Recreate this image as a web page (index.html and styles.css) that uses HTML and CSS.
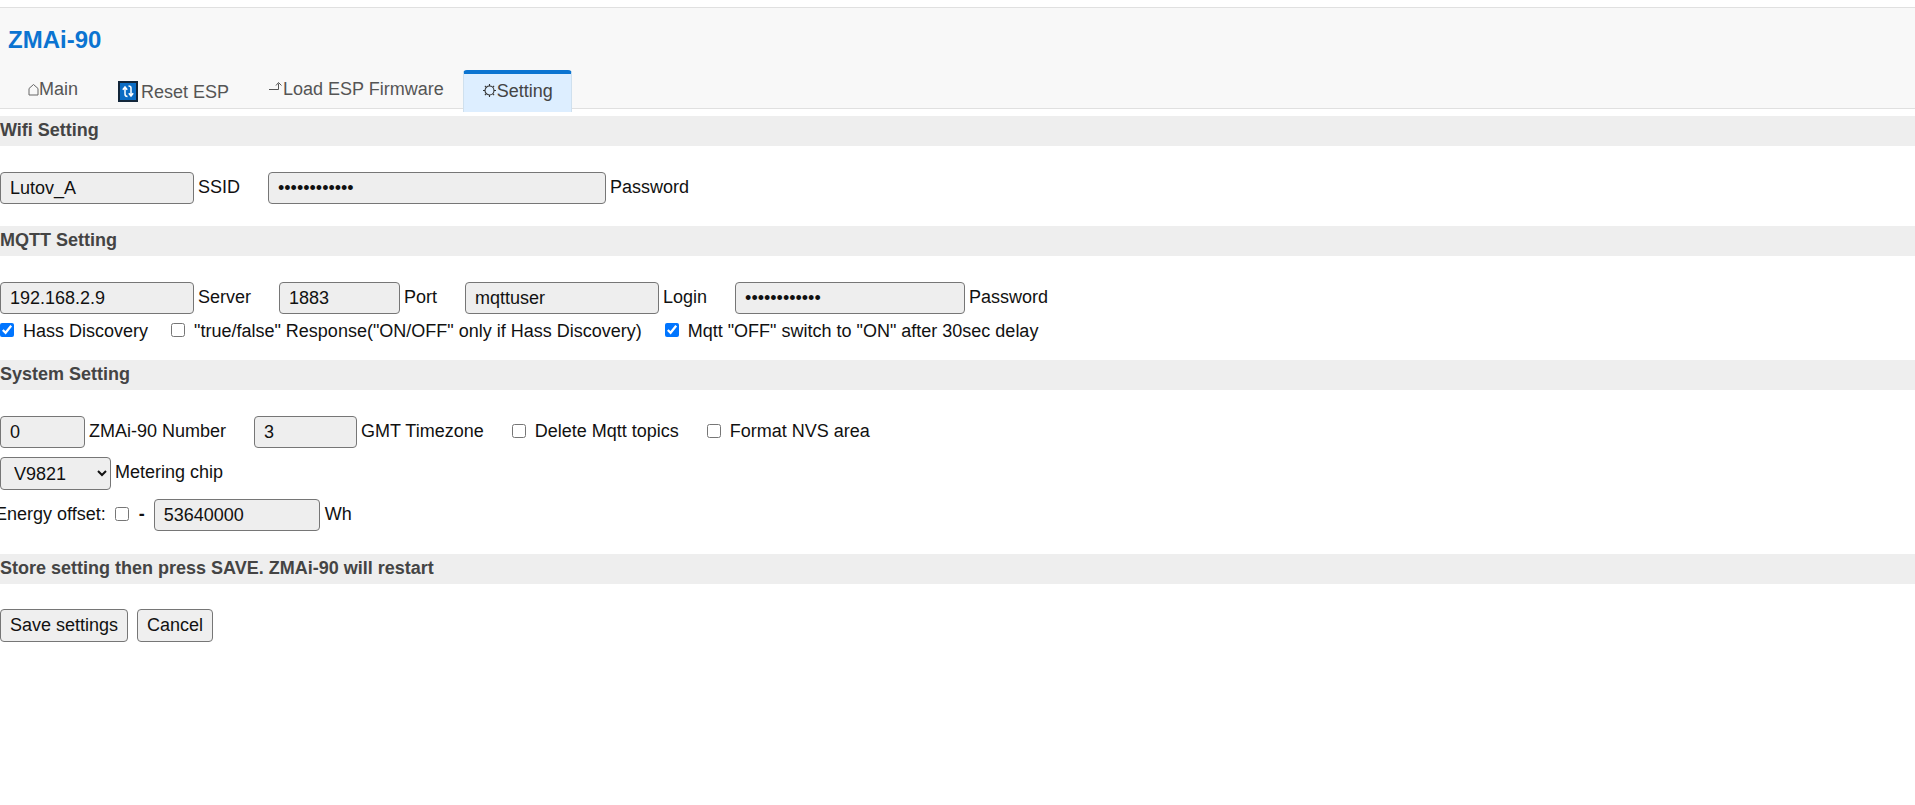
FILE: index.html
```html
<!DOCTYPE html>
<html>
<head>
    <title>ZMAi-90</title>
    <link rel="stylesheet" href="styles.css">
</head>
<body>
    <div class="header">
        <h1 class="title">ZMAi-90</h1>
        <div class="tabs">
            <a class="tab"><svg class="ico-home" viewBox="0 0 11 13"><path d="M1 12V5.500L5.500 1.500 10 5.500V12Z" fill="none" stroke="#666" stroke-width="1"/></svg>Main</a>
            <a class="tab tab-low"><svg class="ico-reset" viewBox="0 0 20 21"><rect x="1" y="1" width="18" height="19" fill="#0a6cc4" stroke="#12263a" stroke-width="2"/><path d="M7 6.500V13q0 2.500 2.500 2.500M4.800 8.700 7 6l2.200 2.700M13 15v-8q0-2-2.500-2M10.800 12.300 13 15l2.200-2.700" fill="none" stroke="#fff" stroke-width="1.500"/></svg>Reset ESP</a>
            <a class="tab"><svg class="ico-load" viewBox="0 0 14 12"><path d="M0 8.500H9.500V2.500M7 4.500 9.500 1.500 12.500 4.500" fill="none" stroke="#555" stroke-width="1"/></svg>Load ESP Firmware</a>
            <a class="tab tab-active"><svg class="ico-gear" viewBox="0 0 15 15"><circle cx="7.500" cy="7.500" r="4.500" fill="none" stroke="#333" stroke-width="1.100"/><path d="M7.500 1v2M7.500 12v2M1 7.500h2M12 7.500h2M2.900 2.900l1.400 1.400M10.700 10.700l1.400 1.400M2.900 12.100l1.400-1.400M10.700 4.300l1.400-1.400" stroke="#333" stroke-width="1.100"/></svg>Setting</a>
        </div>
    </div>

    <div class="bar">Wifi Setting</div>
    <div class="row">
        <input class="w194" type="text" value="Lutov_A">
        <label>SSID</label>
        <input class="w338" type="password" value="............">
        <label>Password</label>
    </div>

    <div class="bar">MQTT Setting</div>
    <div class="row">
        <input class="w194" type="text" value="192.168.2.9">
        <label>Server</label>
        <input class="w121" type="text" value="1883">
        <label>Port</label>
        <input class="w194" type="text" value="mqttuser">
        <label>Login</label>
        <input class="w230" type="password" value="............">
        <label>Password</label>
    </div>
    <div class="row check-row">
        <input type="checkbox" checked><label>Hass Discovery</label>
        <input type="checkbox"><label>"true/false" Response("ON/OFF" only if Hass Discovery)</label>
        <input type="checkbox" checked><label>Mqtt "OFF" switch to "ON" after 30sec delay</label>
    </div>

    <div class="bar">System Setting</div>
    <div class="row">
        <input class="w85" type="text" value="0">
        <label>ZMAi-90 Number</label>
        <input class="w103" type="text" value="3">
        <label>GMT Timezone</label>
        <input type="checkbox"><label>Delete Mqtt topics</label>
        <input type="checkbox"><label>Format NVS area</label>
    </div>
    <div class="row sub-row">
        <select><option>V9821</option></select>
        <label>Metering chip</label>
    </div>
    <div class="row sub-row energy-row">
        <span>Energy offset:</span>
        <input type="checkbox">
        <b class="minus">-</b>
        <input class="w166" type="text" value="53640000">
        <label>Wh</label>
    </div>

    <div class="bar bar-store">Store setting then press SAVE. ZMAi-90 will restart</div>
    <div class="row buttons">
        <button>Save settings</button>
        <button>Cancel</button>
    </div>
</body>
</html>
```

FILE: styles.css
```css
body {
    margin: 0;
    padding-top: 7px;
    font-family: "Liberation Sans", Arial, sans-serif;
    font-size: 18px;
    color: #111;
    background: #fff;
}
.header {
    height: 100px;
    background: #f8f8f8;
    border-top: 1px solid #e0e0e0;
    border-bottom: 1px solid #e0e0e0;
}
.title {
    margin: 0;
    padding: 18px 0 0 8px;
    height: 44px;
    font-size: 24px;
    line-height: 28px;
    font-weight: bold;
    color: #0b74d1;
}
.tabs {
    display: flex;
    padding-left: 8px;
}
.tab {
    display: block;
    height: 38px;
    box-sizing: border-box;
    padding: 9px 20px 0;
    line-height: 20px;
    color: #555;
    white-space: nowrap;
}
.tab-low {
    padding-top: 11px;
}
.tab-active {
    height: 42px;
    padding: 7px 18px 0;
    margin-left: -1px;
    background: #ddeeff;
    border: 1px solid #cfe0ee;
    border-top: 4px solid #0b74d1;
    border-bottom: none;
    border-radius: 4px 4px 0 0;
    color: #444;
}
.ico-home { width: 11px; height: 13px; vertical-align: -1px; }
.ico-reset { width: 20px; height: 21px; vertical-align: -4px; margin-right: 3px; }
.ico-load { width: 14px; height: 12px; vertical-align: 2px; }
.ico-gear { width: 15px; height: 15px; vertical-align: -1px; }

.bar {
    margin: 7px 0 26px;
    height: 30px;
    line-height: 28px;
    background: #eee;
    color: #444;
    font-weight: bold;
}
.row {
    display: flex;
    align-items: center;
    margin-bottom: 22px;
    white-space: nowrap;
}
.row input[type=text], .row input[type=password] {
    height: 32px;
    box-sizing: border-box;
    padding: 0 9px;
    font: 18px "Liberation Sans", Arial, sans-serif;
    color: #111;
    background: #eee;
    border: 1px solid #767676;
    border-radius: 4px;
}
.row label {
    margin: 0 28px 2px 4px;
}
.row input[type=checkbox] {
    width: 14px;
    height: 14px;
    margin: 0 9px 3px 0;
}
.row input[type=checkbox] + label {
    margin-left: 0;
}
.check-row { margin-top: -15px; margin-bottom: 19px; height: 20px; }
.row.check-row label { margin: 0 23px 0 0; }
.sub-row { margin-top: -13px; }
.w85 { width: 85px; }
.w103 { width: 103px; }
.w121 { width: 121px; }
.w166 { width: 166px; }
.w194 { width: 194px; }
.w230 { width: 230px; }
.w338 { width: 338px; }
select {
    width: 111px;
    height: 33px;
    padding-left: 9px;
    font: 18px "Liberation Sans", Arial, sans-serif;
    color: #111;
    background-color: #eee;
    border: 1px solid #767676;
    border-radius: 4px;
}
.energy-row { margin-left: -5px; margin-bottom: 23px; }
.energy-row span { margin-right: 9px; margin-bottom: 2px; }
.energy-row label { margin-left: 5px; }
.minus { margin-right: 9px; margin-left: 1px; margin-bottom: 2px; }
.bar-store { margin-top: 0; margin-bottom: 25px; }
.buttons button {
    height: 33px;
    margin-right: 9px;
    padding: 0 9px;
    font: 18px "Liberation Sans", Arial, sans-serif;
    color: #111;
    background: #efefef;
    border: 1px solid #767676;
    border-radius: 4px;
}
```
